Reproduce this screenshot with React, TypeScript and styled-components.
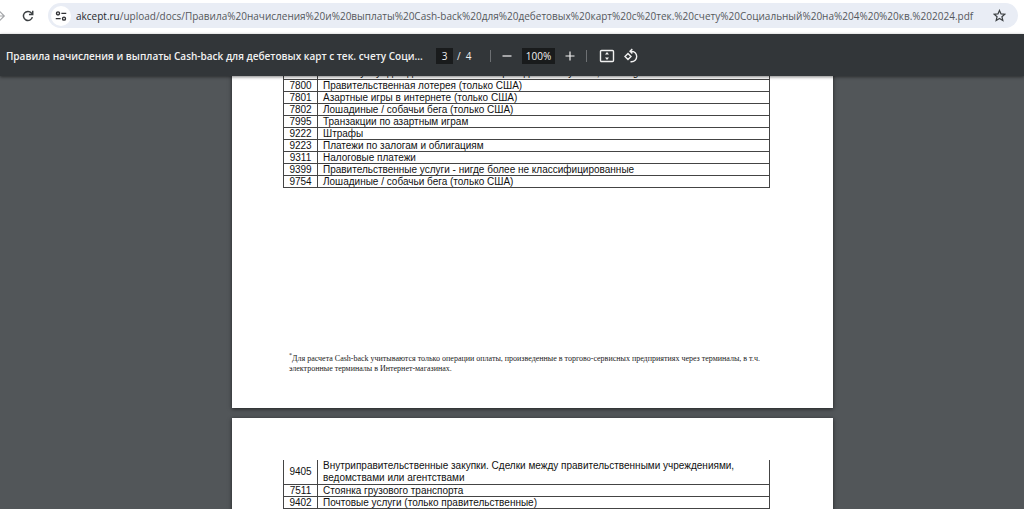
import React from "react";
import styled, { createGlobalStyle } from "styled-components";

const Global = createGlobalStyle`
  * { box-sizing: border-box; }
  html, body { margin: 0; height: 100%; overflow: hidden; }
  #root { height: 100%; }
  button, input { font: inherit; color: inherit; border: 0; padding: 0; margin: 0; background: none; }
`;

const Shell = styled.div`
  display: flex;
  flex-direction: column;
  height: 100vh;
  overflow: hidden;
  background: #525659;
`;

const AddressBar = styled.header`
  display: flex;
  flex: none;
  align-items: center;
  height: 34px;
  padding: 0 6px 3px 0;
  background: #fff;
  font-family: "Open Sans", "Noto Sans", sans-serif;
`;

const NavButton = styled.button<{ $faded?: boolean }>`
  display: flex;
  flex: none;
  width: 16px;
  height: 24px;
  align-items: center;
  justify-content: center;
  color: ${(p) => (p.$faded ? "#a3a5a8" : "#3c4043")};
`;

const NavGroup = styled.nav`
  display: flex;
  flex: none;
  gap: 13px;
  width: 48px;
  margin-left: -9px;
  margin-right: 9px;
`;

const Omnibox = styled.form`
  display: flex;
  flex: 1;
  min-width: 0;
  align-items: center;
  gap: 5px;
  height: 25px;
  padding: 0 11px 0 3px;
  border-radius: 13px;
  background: #e9edf5;
`;

const SiteInfo = styled.button`
  display: flex;
  flex: none;
  width: 20px;
  height: 20px;
  align-items: center;
  justify-content: center;
  border-radius: 50%;
  background: #fff !important;
  color: #303134;
`;

const Url = styled.a`
  flex: 1;
  min-width: 0;
  overflow: hidden;
  white-space: nowrap;
  font-size: 10px;
  line-height: 20px;
  color: #55585c;
  text-decoration: none;
`;

const Host = styled.span`
  color: #27292c;
`;

const Toolbar = styled.div`
  position: relative;
  z-index: 1;
  display: flex;
  flex: none;
  align-items: center;
  height: 42px;
  padding: 1px 6px 0;
  background: #323639;
  box-shadow: 0 1px 3px rgba(0, 0, 0, 0.5);
  color: #f1f1f1;
  font: 500 10px/16px "Open Sans", "Noto Sans", sans-serif;
`;

const Title = styled.h1`
  width: 420px;
  margin: 0 10px 0 0;
  white-space: nowrap;
  font: 600 10px/16px "Open Sans", "Noto Sans", sans-serif;
`;

const Field = styled.input<{ $width: number }>`
  flex: none;
  width: ${(p) => p.$width}px;
  height: 16px;
  background: #191b1c !important;
  text-align: center;
`;

const PageCount = styled.span`
  margin-left: 4px;
  width: 27px;
  white-space: pre;
`;

const Divider = styled.span`
  width: 1px;
  height: 12px;
  margin: 0 6px;
  background: #6d7073;
`;

const ToolButton = styled.button`
  display: flex;
  width: 20px;
  height: 20px;
  align-items: center;
  justify-content: center;
`;

const Fit = styled.div`
  display: flex;
  gap: 4px;
  margin-left: 4px;
`;

const Zoom = styled.div`
  display: flex;
  align-items: center;
  gap: 5px;
`;

const Viewer = styled.main`
  display: flex;
  flex: 1;
  min-height: 0;
  flex-direction: column;
  align-items: center;
  gap: 10px;
  overflow: hidden;
  padding-left: 41px;
`;

const Sheet = styled.section`
  flex: none;
  width: 601px;
  max-width: 100%;
  padding: 0 63px 34px 51px;
  background: #fff;
  box-shadow: 0 1px 4px rgba(0, 0, 0, 0.6);
`;

const FirstSheet = styled(Sheet)`
  margin-top: -9px;
`;

const NextSheet = styled(Sheet)`
  padding-top: 42px;
`;

const Codes = styled.table`
  width: 100%;
  border-collapse: collapse;
  table-layout: fixed;
  color: #111;
  font: 10px/11px "Liberation Sans", Arial, sans-serif;
  tr:first-child td {
    border-top: 0;
  }
`;

const Code = styled.td`
  width: 34px;
  height: 12px;
  padding: 0;
  border: 1px solid #444;
  text-align: center;
`;

const Name = styled.td`
  height: 12px;
  padding: 0 0 0 5px;
  border: 1px solid #444;
`;

const LongName = styled(Name)`
  padding-right: 20px;
  line-height: 12px;
`;

const Footnote = styled.p`
  margin: 166px 0 0 6px;
  color: #222;
  font: 8px/10px "Liberation Serif", "Times New Roman", serif;
`;

const Mark = styled.sup`
  font-size: 6px;
  line-height: 0;
`;

type Row = [string, string];

const firstRows: Row[] = [
  ["6538", "Оплата услуг для денежных и иных переводов MoneySend, Funding"],
  ["7800", "Правительственная лотерея (только США)"],
  ["7801", "Азартные игры в интернете (только США)"],
  ["7802", "Лошадиные / собачьи бега (только США)"],
  ["7995", "Транзакции по азартным играм"],
  ["9222", "Штрафы"],
  ["9223", "Платежи по залогам и облигациям"],
  ["9311", "Налоговые платежи"],
  ["9399", "Правительственные услуги - нигде более не классифицированные"],
  ["9754", "Лошадиные / собачьи бега (только США)"],
];

const nextRows: Row[] = [
  ["7511", "Стоянка грузового транспорта"],
  ["9402", "Почтовые услуги (только правительственные)"],
];

const CodeRow = ({ row }: { row: Row }) => (
  <tr>
    <Code>{row[0]}</Code>
    <Name>{row[1]}</Name>
  </tr>
);

const Icon = ({ size, width = 1.4, children }: { size: number; width?: number; children: React.ReactNode }) => (
  <svg width={size} height={size} viewBox="0 0 16 16" fill="none" stroke="currentColor" strokeWidth={width}>
    {children}
  </svg>
);

export default function App() {
  return (
    <Shell>
      <Global />
      <AddressBar>
        <NavGroup>
          <NavButton $faded aria-label="Вперёд">
            <Icon size={14}><path d="M1 8h13M8.500 2.500L14 8l-5.500 5.500" /></Icon>
          </NavButton>
          <NavButton aria-label="Обновить">
            <Icon size={14} width={1.7}>
              <path d="M13 9.300A5.200 5.200 0 1 1 11.900 4.500L13.200 5.800" />
              <path d="M13.400 2v4.300H9.100" />
            </Icon>
          </NavButton>
        </NavGroup>
        <Omnibox>
          <SiteInfo type="button" aria-label="Сведения о сайте">
            <Icon size={12} width={1.8}>
              <circle cx="4" cy="4.500" r="2" /><path d="M8.500 4.500H15M1 11.500h6.500" /><circle cx="12" cy="11.500" r="2" />
            </Icon>
          </SiteInfo>
          <Url href="#"><Host>akcept.ru</Host>/upload/docs/Правила%20начисления%20и%20выплаты%20Cash-back%20для%20дебетовых%20карт%20с%20тек.%20счету%20Социальный%20на%204%20%20кв.%202024.pdf</Url>
          <NavButton type="button" aria-label="Добавить в закладки">
            <Icon size={13} width={1.5}><path d="M8 1.700l1.900 4.300 4.700.4-3.600 3.100 1.100 4.600L8 11.700l-4.100 2.400L5 9.500 1.400 6.400 6.100 6z" /></Icon>
          </NavButton>
        </Omnibox>
      </AddressBar>
      <Toolbar>
        <Title>Правила начисления и выплаты Cash-back для дебетовых карт с тек. счету Соци...</Title>
        <Field $width={17} aria-label="Страница" defaultValue="3" />
        <PageCount>/  4</PageCount>
        <Divider />
        <Zoom>
          <ToolButton aria-label="Уменьшить"><Icon size={12} width={1.6}><path d="M2 8h12" /></Icon></ToolButton>
          <Field $width={33} aria-label="Масштаб" defaultValue="100%" />
          <ToolButton aria-label="Увеличить"><Icon size={12} width={1.6}><path d="M2 8h12M8 2v12" /></Icon></ToolButton>
        </Zoom>
        <Divider />
        <Fit>
          <ToolButton aria-label="По размеру страницы">
            <Icon size={16}>
              <rect x="1.500" y="2.500" width="13" height="11" rx="1" />
              <path d="M8 4l2 2.500H6zM8 12l2-2.500H6z" fill="currentColor" stroke="none" />
            </Icon>
          </ToolButton>
          <ToolButton aria-label="Повернуть">
            <Icon size={16}>
              <path d="M5 5.500L8 8.500 5 11.500 2 8.500zM7 3.300H8.500a5.200 5.200 0 0 1 0 10.400H7.500M9.300 1L7 3.300 9.300 5.600" />
            </Icon>
          </ToolButton>
        </Fit>
      </Toolbar>
      <Viewer>
        <FirstSheet>
          <Codes>
            <tbody>{firstRows.map((row) => <CodeRow key={row[0]} row={row} />)}</tbody>
          </Codes>
          <Footnote>
            <Mark>*</Mark>Для расчета Cash-back учитываются только операции оплаты, произведенные в торгово-сервисных предприятиях через терминалы, в т.ч. электронные терминалы в Интернет-магазинах.
          </Footnote>
        </FirstSheet>
        <NextSheet>
          <Codes>
            <tbody>
              <tr>
                <Code>9405</Code>
                <LongName>Внутриправительственные закупки. Сделки между правительственными учреждениями, ведомствами или агентствами</LongName>
              </tr>
              {nextRows.map((row) => <CodeRow key={row[0]} row={row} />)}
            </tbody>
          </Codes>
        </NextSheet>
      </Viewer>
    </Shell>
  );
}
